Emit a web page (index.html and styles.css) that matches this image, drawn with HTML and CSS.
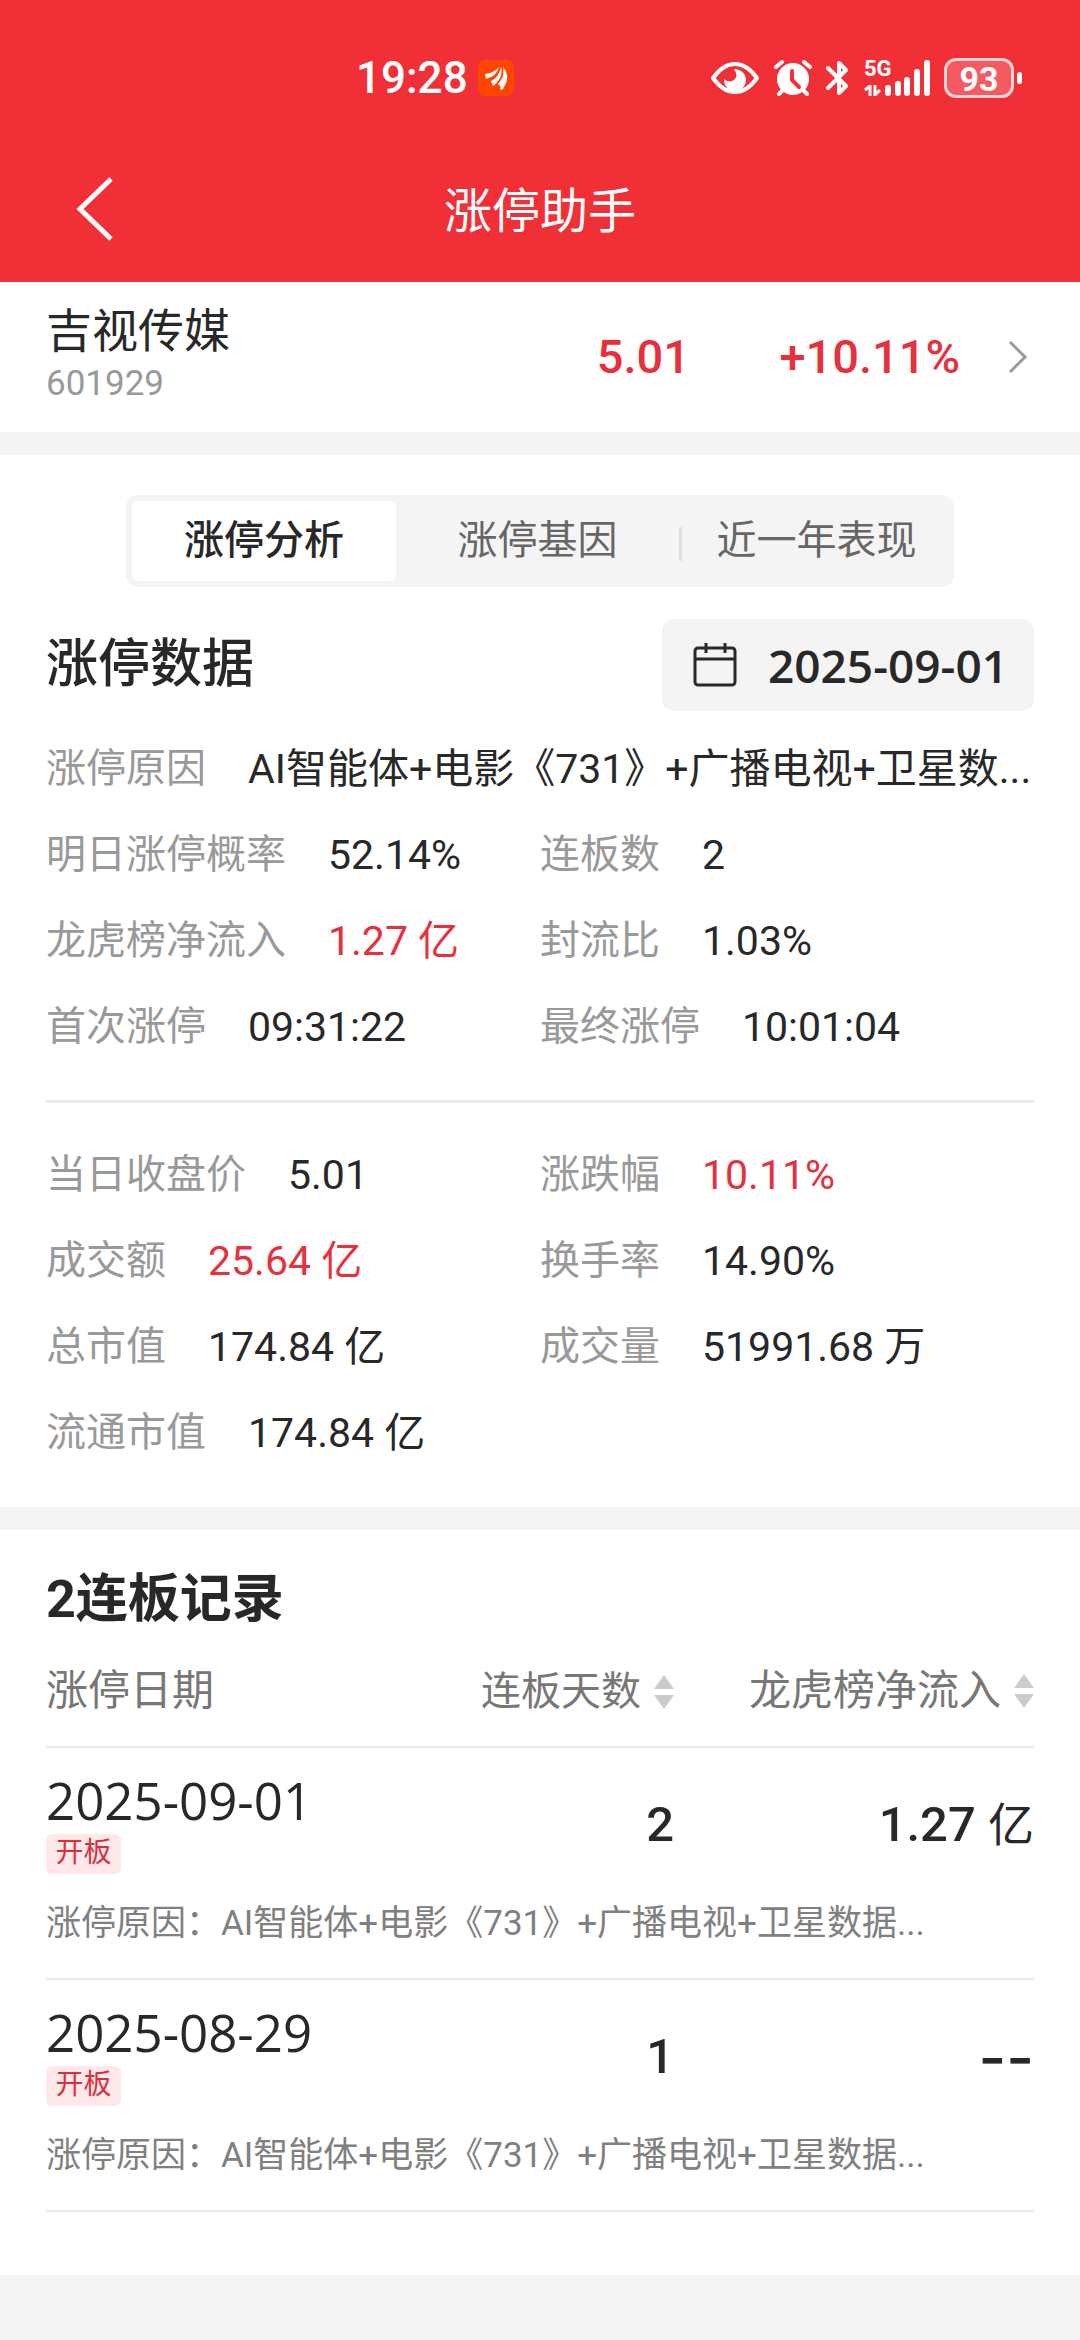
FILE: index.html
```html
<!DOCTYPE html>
<html lang="zh-CN">

<head>
  <meta charset="UTF-8" />
  <meta name="viewport" content="width=device-width, initial-scale=1.0" />
  <title>涨停助手</title>
  <link rel="stylesheet" href="styles.css">
</head>

<body>
  <header class="top">
    <div class="status">
      <span class="clock">19:28</span>
      <svg class="app-icon" width="36" height="36" viewBox="0 0 36 36">
        <rect width="36" height="36" rx="7" fill="#ff4500" />
        <path d="M7 14 Q16 13 21 7 Q19 16 8 19 Z M13 21 Q21 17 23 7 Q26 18 15 26 Z M20 24 Q27 17 25 7 Q33 17 26 27 Q25 31 22 29 Q24 26 20 24 Z" fill="#fff" />
      </svg>
      <div class="status-icons">
        <svg width="50" height="36" viewBox="0 0 50 36">
          <path d="M3 18 Q13 4 25 4 Q37 4 47 18 Q37 32 25 32 Q13 32 3 18 Z" fill="none" stroke="#fff" stroke-width="4" stroke-linejoin="round" />
          <path d="M24 9 A11 11 0 1 1 14 19 Q20 24 25 19 Q28 15 24 9 Z" fill="#fff" />
        </svg>
        <svg width="38" height="36" viewBox="0 0 38 36">
          <circle cx="19" cy="19" r="16" fill="#fff" />
          <path d="M2 7 L8 2 M36 7 L30 2 M9 30 L5 34 M29 30 L33 34" stroke="#fff" stroke-width="4" stroke-linecap="round" />
          <path d="M18 11 V20 L25 27" fill="none" stroke="#f12f37" stroke-width="4" stroke-linecap="round" stroke-linejoin="round" />
        </svg>
        <svg width="24" height="36" viewBox="0 0 24 36">
          <path d="M2 8 L20 26 L13 33 V22 M2 28 L20 10 L13 3 V14" fill="none" stroke="#fff" stroke-width="4" stroke-linecap="round" stroke-linejoin="round" />
        </svg>
        <div class="signal">
          <div class="network">
            <span>5G</span>
            <svg width="17" height="11" viewBox="0 0 17 11">
              <path d="M1 5 L6 1 V11 M11 0 V10 L16 5" fill="none" stroke="#fff" stroke-width="3" />
            </svg>
          </div>
          <svg width="45" height="36" viewBox="0 0 45 36">
            <path d="M3 28 V33 M13 24 V33 M22 20 V33 M32 12 V33 M42 3 V33" stroke="#fff" stroke-width="6" stroke-linecap="round" />
          </svg>
        </div>
        <div class="battery"><span>93</span></div>
      </div>
    </div>
    <nav class="nav">
      <button class="back" aria-label="返回">
        <svg width="40" height="66" viewBox="0 0 40 66">
          <path d="M37 3 L6 33 L37 63" fill="none" stroke="#fff" stroke-width="5" />
        </svg>
      </button>
      <h1>涨停助手</h1>
    </nav>
  </header>

  <main>
    <a class="stock" href="#">
      <div class="stock-info">
        <div class="stock-name">吉视传媒</div>
        <div class="stock-code">601929</div>
      </div>
      <span class="price">5.01</span>
      <span class="change">+10.11%</span>
      <svg width="20" height="34" viewBox="0 0 20 34">
        <path d="M2 2 L17 17 L2 32" fill="none" stroke="#999" stroke-width="3" />
      </svg>
    </a>

    <section class="analysis">
      <div class="tabs" role="tablist">
        <button class="tab active" role="tab" aria-selected="true">涨停分析</button>
        <button class="tab" role="tab" aria-selected="false">涨停基因</button>
        <button class="tab divided" role="tab" aria-selected="false">近一年表现</button>
      </div>

      <div class="section-head">
        <h2>涨停数据</h2>
        <button class="date-btn">
          <svg width="46" height="46" viewBox="0 0 46 46">
            <rect x="3" y="6" width="40" height="37" rx="3" fill="none" stroke="#282828" stroke-width="3" />
            <path d="M3 17 H43 M14 1 V11 M33 1 V11" stroke="#282828" stroke-width="3" />
          </svg>
          <span>2025-09-01</span>
        </button>
      </div>

      <dl class="data">
        <div class="wide"><dt>涨停原因</dt><dd>AI智能体+电影《731》+广播电视+卫星数...</dd></div>
        <div><dt>明日涨停概率</dt><dd>52.14%</dd></div>
        <div><dt>连板数</dt><dd>2</dd></div>
        <div><dt>龙虎榜净流入</dt><dd class="red">1.27 亿</dd></div>
        <div><dt>封流比</dt><dd>1.03%</dd></div>
        <div><dt>首次涨停</dt><dd>09:31:22</dd></div>
        <div><dt>最终涨停</dt><dd>10:01:04</dd></div>
      </dl>

      <dl class="data">
        <div><dt>当日收盘价</dt><dd>5.01</dd></div>
        <div><dt>涨跌幅</dt><dd class="red">10.11%</dd></div>
        <div><dt>成交额</dt><dd class="red">25.64 亿</dd></div>
        <div><dt>换手率</dt><dd>14.90%</dd></div>
        <div><dt>总市值</dt><dd>174.84 亿</dd></div>
        <div><dt>成交量</dt><dd>51991.68 万</dd></div>
        <div><dt>流通市值</dt><dd>174.84 亿</dd></div>
      </dl>
    </section>

    <section class="records">
      <h2>2连板记录</h2>
      <table>
        <thead>
          <tr>
            <th class="col-date">涨停日期</th>
            <th class="col-days">
              <button class="sort small">连板天数
                <svg width="20" height="34" viewBox="0 0 20 34"><path d="M10 0 L20 14 H0 Z M0 20 H20 L10 34 Z" fill="#ccc" /></svg>
              </button>
            </th>
            <th class="col-flow">
              <button class="sort">龙虎榜净流入
                <svg width="20" height="34" viewBox="0 0 20 34"><path d="M10 0 L20 14 H0 Z M0 20 H20 L10 34 Z" fill="#ccc" /></svg>
              </button>
            </th>
          </tr>
        </thead>
        <tbody>
          <tr>
            <td><div class="day">2025-09-01</div><span class="tag">开板</span></td>
            <td class="num">2</td>
            <td class="num">1.27 <span class="unit">亿</span></td>
          </tr>
          <tr class="reason">
            <td colspan="3">涨停原因：AI智能体+电影《731》+广播电视+卫星数据...</td>
          </tr>
          <tr>
            <td><div class="day">2025-08-29</div><span class="tag">开板</span></td>
            <td class="num">1</td>
            <td class="num dash">--</td>
          </tr>
          <tr class="reason">
            <td colspan="3">涨停原因：AI智能体+电影《731》+广播电视+卫星数据...</td>
          </tr>
        </tbody>
      </table>
    </section>
  </main>
</body>

</html>
```
FILE: styles.css
```css
* {
  box-sizing: border-box;
}

body {
  margin: 0;
  background: #f4f4f4;
  font-family: Roboto, "Noto Sans CJK SC", sans-serif;
  font-size: 40px;
  line-height: 60px;
  color: #282828;
}

h1,
h2,
dl,
dd {
  margin: 0;
}

button {
  padding: 0;
  border: 0;
  background: none;
  font: inherit;
  color: inherit;
  cursor: pointer;
}

svg {
  display: block;
  flex: none;
}

.red {
  color: #e8303d;
}

/* header */
.top {
  background: #f12f37;
  color: #fff;
}

.status {
  display: flex;
  align-items: center;
  height: 136px;
  padding: 20px 58px 0 356px;
}

.clock {
  font-size: 44px;
  font-weight: 500;
}

.app-icon {
  margin-left: 10px;
}

.status-icons {
  display: flex;
  align-items: center;
  gap: 14px;
  margin-left: auto;
}

.signal {
  display: flex;
  align-items: flex-end;
}

.network {
  display: flex;
  flex-direction: column;
  justify-content: space-between;
  width: 21px;
  height: 36px;
}

.network span {
  font-size: 22px;
  font-weight: 700;
  line-height: 18px;
}

.battery {
  position: relative;
  width: 70px;
  height: 40px;
  border: 3px solid #fbd5d7;
  border-radius: 12px;
  background: #f55a61;
  font-size: 34px;
  font-weight: 700;
  line-height: 36px;
  text-align: center;
  margin-right: 8px;
}

.battery::after {
  content: "";
  position: absolute;
  right: -11px;
  top: 11px;
  width: 5px;
  height: 12px;
  border-radius: 3px;
  background: #fff;
}

.nav {
  display: grid;
  grid-template-columns: 1fr auto 1fr;
  align-items: center;
  height: 146px;
  padding: 0 74px;
}

.back {
  justify-self: start;
}

.nav h1 {
  padding-top: 6px;
  font-size: 48px;
  font-weight: 400;
}

/* stock row */
.stock {
  display: flex;
  align-items: center;
  height: 150px;
  padding: 0 52px 0 46px;
  margin-bottom: 23px;
  background: #fff;
  color: inherit;
  text-decoration: none;
}

.stock-info {
  flex: 1;
  padding-bottom: 8px;
}

.stock-name {
  font-size: 46px;
  line-height: 62px;
}

.stock-code {
  font-size: 35px;
  line-height: 44px;
  color: #999;
}

.price,
.change {
  font-size: 47px;
  font-weight: 500;
  color: #e8303d;
}

.change {
  width: 270px;
  margin-right: 48px;
  text-align: right;
}

/* analysis */
.analysis {
  padding: 40px 46px 44px;
  margin-bottom: 23px;
  background: #fff;
}

.tabs {
  display: grid;
  grid-template-columns: 264fr 283fr 275fr;
  margin: 0 80px 32px;
  padding: 6px 0 6px 6px;
  border-radius: 12px;
  background: #f4f4f4;
}

.tab {
  position: relative;
  height: 80px;
  border-radius: 6px;
  color: #666;
}

.tab.active {
  background: #fff;
  color: #282828;
  font-weight: 500;
}

.divided::before {
  content: "";
  position: absolute;
  left: 0;
  top: 26px;
  width: 3px;
  height: 34px;
  background: #e0e0e0;
}

.section-head {
  display: flex;
  align-items: center;
  justify-content: space-between;
  margin-bottom: 28px;
}

h2 {
  font-size: 52px;
  font-weight: 500;
}

.date-btn {
  display: flex;
  align-items: center;
  gap: 30px;
  height: 92px;
  padding: 0 26px 0 30px;
  border-radius: 12px;
  background: #f4f4f4;
  font-family: "Open Sans", sans-serif;
  font-size: 46px;
  font-weight: 600;
}

.data {
  display: grid;
  grid-template-columns: 1fr 1fr;
  row-gap: 26px;
}

.data div {
  display: flex;
  gap: 42px;
  white-space: nowrap;
}

.data .wide {
  grid-column: 1 / 3;
}

.data dt {
  color: #999;
}

.data dd {
  font-size: 41px;
}

.data + .data {
  margin-top: 43px;
  padding-top: 42px;
  border-top: 3px solid #ebebeb;
}

/* records */
.records {
  padding: 40px 46px 63px;
  background: #fff;
}

.records h2 {
  font-weight: 700;
}

table {
  width: 100%;
  margin-top: 22px;
  border-collapse: collapse;
  table-layout: fixed;
}

th,
td {
  padding: 0;
  text-align: right;
}

th {
  height: 95px;
  padding-bottom: 16px;
  border-bottom: 2px solid #ebebeb;
  font-size: 42px;
  font-weight: 400;
  color: #777;
}

th:first-child,
td:first-child {
  text-align: left;
}

.col-date {
  width: 38%;
}

.col-flow {
  width: 360px;
}

.sort {
  display: inline-flex;
  align-items: center;
  gap: 13px;
}

.sort.small {
  font-size: 40px;
}

td {
  padding-top: 22px;
}

.day {
  font-family: "Open Sans", sans-serif;
  font-size: 51px;
}

.tag {
  display: block;
  width: 75px;
  height: 40px;
  margin-top: 4px;
  border-radius: 6px;
  background: #ffe8ea;
  font-size: 28px;
  line-height: 38px;
  text-align: center;
  color: #d9303e;
}

.num {
  padding-top: 28px;
  font-size: 49px;
  font-weight: 500;
}

.unit {
  font-size: 46px;
  font-weight: 400;
}

.dash {
  font-family: Inter, sans-serif;
  font-size: 60px;
}

.reason td {
  padding: 20px 0 24px;
  border-bottom: 2px solid #ebebeb;
  font-size: 35px;
  color: #808080;
}
```
